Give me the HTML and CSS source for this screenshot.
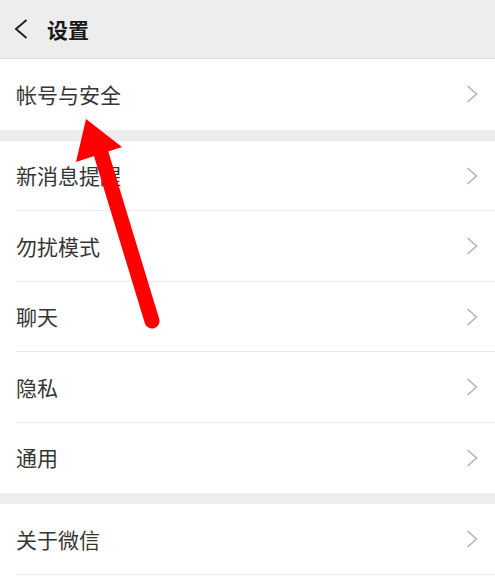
FILE: index.html
```html
<!DOCTYPE html>
<html lang="zh-CN">
<head>
    <meta charset="UTF-8">
    <meta name="viewport" content="width=device-width, initial-scale=1.0">
    <title>设置</title>
    <link rel="stylesheet" href="styles.css">
</head>
<body>
    <div class="page">
        <div class="header">
            <svg class="back" width="14" height="22" viewBox="0 0 14 22">
                <polyline points="12.5,2 2,11 12.5,20" fill="none" stroke="#222" stroke-width="2"/>
            </svg>
            <span class="title">设置</span>
        </div>

        <div class="group">
            <div class="item"><span>帐号与安全</span><svg class="chev" width="12" height="20" viewBox="0 0 12 20"><polyline points="1.5,2 10.5,10 1.5,18" fill="none" stroke="#b4b4b4" stroke-width="1.6"/></svg></div>
        </div>

        <div class="group">
            <div class="item"><span>新消息提醒</span><svg class="chev" width="12" height="20" viewBox="0 0 12 20"><polyline points="1.5,2 10.5,10 1.5,18" fill="none" stroke="#b4b4b4" stroke-width="1.6"/></svg></div>
            <div class="item"><span>勿扰模式</span><svg class="chev" width="12" height="20" viewBox="0 0 12 20"><polyline points="1.5,2 10.5,10 1.5,18" fill="none" stroke="#b4b4b4" stroke-width="1.6"/></svg></div>
            <div class="item"><span>聊天</span><svg class="chev" width="12" height="20" viewBox="0 0 12 20"><polyline points="1.5,2 10.5,10 1.5,18" fill="none" stroke="#b4b4b4" stroke-width="1.6"/></svg></div>
            <div class="item"><span>隐私</span><svg class="chev" width="12" height="20" viewBox="0 0 12 20"><polyline points="1.5,2 10.5,10 1.5,18" fill="none" stroke="#b4b4b4" stroke-width="1.6"/></svg></div>
            <div class="item"><span>通用</span><svg class="chev" width="12" height="20" viewBox="0 0 12 20"><polyline points="1.5,2 10.5,10 1.5,18" fill="none" stroke="#b4b4b4" stroke-width="1.6"/></svg></div>
        </div>

        <div class="group last">
            <div class="item"><span>关于微信</span><svg class="chev" width="12" height="20" viewBox="0 0 12 20"><polyline points="1.5,2 10.5,10 1.5,18" fill="none" stroke="#b4b4b4" stroke-width="1.6"/></svg></div>
        </div>

        <!-- 标注箭头 -->
        <svg class="pointer" width="495" height="586" viewBox="0 0 495 586">
            <line x1="152" y1="321" x2="100" y2="150" stroke="#ff0000" stroke-width="15" stroke-linecap="round"/>
            <polygon points="86,119 76,162 122,147" fill="#ff0000"/>
        </svg>
    </div>
</body>
</html>
```

FILE: styles.css
```css
* {
    margin: 0;
    padding: 0;
    box-sizing: border-box;
}

body {
    font-family: "Noto Sans CJK SC", "Noto Sans", sans-serif;
    background: #fff;
    color: #353535;
    overflow: hidden;
}

.page {
    position: relative;
    width: 495px;
    height: 586px;
    background: #fff;
}

.header {
    height: 59px;
    background: #ededed;
    border-bottom: 1px solid #d9d9d9;
    display: flex;
    align-items: center;
    padding-left: 14px;
}

.back {
    display: block;
    margin-top: -1px;
}

.title {
    margin-left: 19px;
    font-size: 21px;
    font-weight: bold;
    color: #1a1a1a;
    line-height: 1;
}

.group {
    background: #fff;
    border-bottom: 11.5px solid #ededed;
}

.group.last {
    border-bottom: none;
}

.item {
    height: 70.5px;
    display: flex;
    align-items: center;
    justify-content: space-between;
    padding: 0 17px 0 16px;
    font-size: 21px;
    position: relative;
}

.item::after {
    content: "";
    position: absolute;
    left: 16px;
    right: 0;
    bottom: 0;
    height: 1px;
    background: #e8e8e8;
}

.group:not(.last) .item:last-child::after {
    display: none;
}

.item span {
    line-height: 1;
}

.chev {
    display: block;
}

.pointer {
    position: absolute;
    top: 0;
    left: 0;
    pointer-events: none;
}
```
